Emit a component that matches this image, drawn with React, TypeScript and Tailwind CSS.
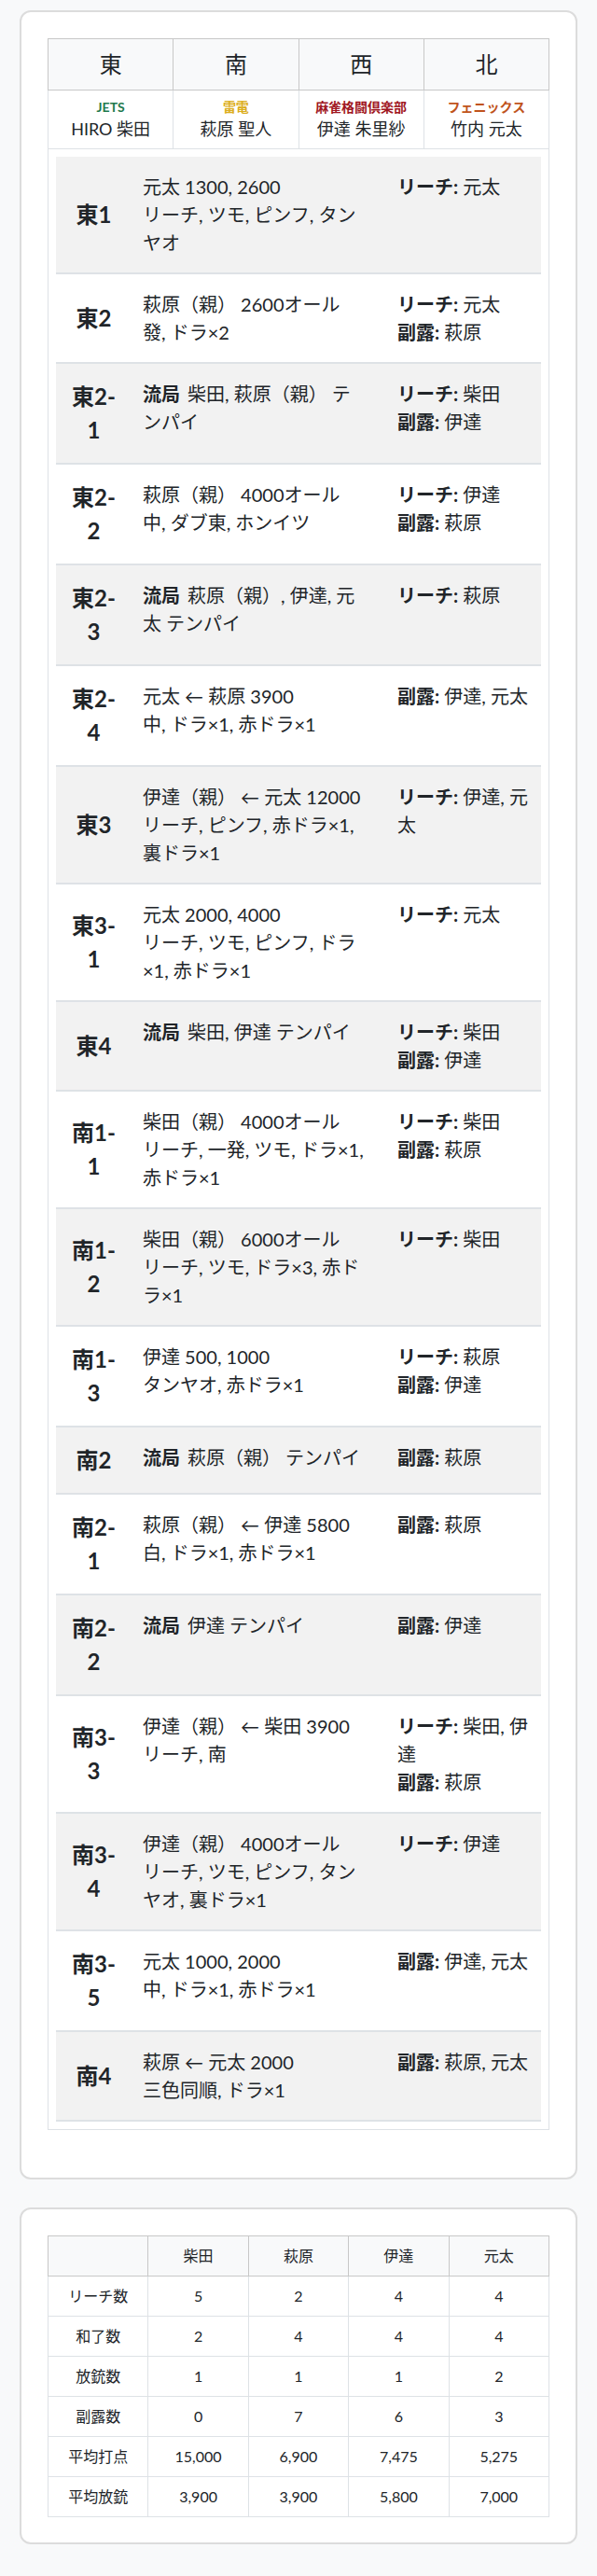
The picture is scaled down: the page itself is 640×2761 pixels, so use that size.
import React from 'react';

interface Round {
  label: string;
  draw?: boolean;
  lines: string[];
  riichi?: string;
  naki?: string;
}

const rounds: Round[] = [
  { label: '東1', lines: ['元太 1300, 2600', 'リーチ, ツモ, ピンフ, タンヤオ'], riichi: '元太' },
  { label: '東2', lines: ['萩原（親） 2600オール', '發, ドラ×2'], riichi: '元太', naki: '萩原' },
  { label: '東2-1', draw: true, lines: ['柴田, 萩原（親） テンパイ'], riichi: '柴田', naki: '伊達' },
  { label: '東2-2', lines: ['萩原（親） 4000オール', '中, ダブ東, ホンイツ'], riichi: '伊達', naki: '萩原' },
  { label: '東2-3', draw: true, lines: ['萩原（親）, 伊達, 元太 テンパイ'], riichi: '萩原' },
  { label: '東2-4', lines: ['元太 ← 萩原 3900', '中, ドラ×1, 赤ドラ×1'], naki: '伊達, 元太' },
  { label: '東3', lines: ['伊達（親） ← 元太 12000', 'リーチ, ピンフ, 赤ドラ×1, 裏ドラ×1'], riichi: '伊達, 元太' },
  { label: '東3-1', lines: ['元太 2000, 4000', 'リーチ, ツモ, ピンフ, ドラ×1, 赤ドラ×1'], riichi: '元太' },
  { label: '東4', draw: true, lines: ['柴田, 伊達 テンパイ'], riichi: '柴田', naki: '伊達' },
  { label: '南1-1', lines: ['柴田（親） 4000オール', 'リーチ, 一発, ツモ, ドラ×1, 赤ドラ×1'], riichi: '柴田', naki: '萩原' },
  { label: '南1-2', lines: ['柴田（親） 6000オール', 'リーチ, ツモ, ドラ×3, 赤ドラ×1'], riichi: '柴田' },
  { label: '南1-3', lines: ['伊達 500, 1000', 'タンヤオ, 赤ドラ×1'], riichi: '萩原', naki: '伊達' },
  { label: '南2', draw: true, lines: ['萩原（親） テンパイ'], naki: '萩原' },
  { label: '南2-1', lines: ['萩原（親） ← 伊達 5800', '白, ドラ×1, 赤ドラ×1'], naki: '萩原' },
  { label: '南2-2', draw: true, lines: ['伊達 テンパイ'], naki: '伊達' },
  { label: '南3-3', lines: ['伊達（親） ← 柴田 3900', 'リーチ, 南'], riichi: '柴田, 伊達', naki: '萩原' },
  { label: '南3-4', lines: ['伊達（親） 4000オール', 'リーチ, ツモ, ピンフ, タンヤオ, 裏ドラ×1'], riichi: '伊達' },
  { label: '南3-5', lines: ['元太 1000, 2000', '中, ドラ×1, 赤ドラ×1'], naki: '伊達, 元太' },
  { label: '南4', lines: ['萩原 ← 元太 2000', '三色同順, ドラ×1'], naki: '萩原, 元太' },
];

const seats = [
  { wind: '東', team: 'JETS', color: 'text-[#1f7a4d]', player: 'HIRO 柴田' },
  { wind: '南', team: '雷電', color: 'text-[#dcae1d]', player: '萩原 聖人' },
  { wind: '西', team: '麻雀格闘倶楽部', color: 'text-[#a01722]', player: '伊達 朱里紗' },
  { wind: '北', team: 'フェニックス', color: 'text-[#c0531c]', player: '竹内 元太' },
];

const stats = [
  { name: 'リーチ数', values: ['5', '2', '4', '4'] },
  { name: '和了数', values: ['2', '4', '4', '4'] },
  { name: '放銃数', values: ['1', '1', '1', '2'] },
  { name: '副露数', values: ['0', '7', '6', '3'] },
  { name: '平均打点', values: ['15,000', '6,900', '7,475', '5,275'] },
  { name: '平均放銃', values: ['3,900', '3,900', '5,800', '7,000'] },
];

function RoundRow({ round, striped }: { round: Round; striped: boolean }) {
  return (
    <div
      className={`grid grid-cols-[81px_269px_174px] border-b-2 border-[#dee2e6] ${
        striped ? 'bg-[#f2f2f2]' : 'bg-white'
      }`}
    >
      {/* 局 */}
      <div className="flex items-center justify-center px-4 py-[17px] text-center text-[24px] font-bold leading-[36px]">
        {round.label}
      </div>

      {/* 結果 */}
      <div className="pl-3 pr-4 py-[17px] text-[20px] leading-[30px]">
        {round.lines.map((line, i) => (
          <div key={i}>
            {round.draw && i === 0 && <span className="mr-2 font-bold">流局</span>}
            {line}
          </div>
        ))}
      </div>

      {/* リーチ・副露 */}
      <div className="px-4 py-[17px] text-[20px] leading-[30px]">
        {round.riichi && (
          <div>
            <span className="font-bold">リーチ:</span> {round.riichi}
          </div>
        )}
        {round.naki && (
          <div>
            <span className="font-bold">副露:</span> {round.naki}
          </div>
        )}
      </div>
    </div>
  );
}

export default function App() {
  return (
    <div className="min-h-screen bg-[#f8f9fa] px-[21px] pt-[11px] pb-[42px] font-[family-name:Lato,'Noto_Sans_CJK_JP',sans-serif] text-[#212529]">
      {/* 局ごとの結果 */}
      <div className="rounded-xl border-2 border-[#dcdcdc] bg-white px-7 pt-7 pb-[51px]">
        <table className="w-full table-fixed border-collapse border border-[#dee2e6]">
          <thead>
            <tr>
              {seats.map((s) => (
                <th
                  key={s.wind}
                  className="border border-[#c8c8c8] bg-[#f8f9fa] py-[9px] text-center text-2xl font-normal leading-[36px]"
                >
                  {s.wind}
                </th>
              ))}
            </tr>
          </thead>
          <tbody>
            <tr>
              {seats.map((s) => (
                <td key={s.wind} className="border border-[#dee2e6] py-[7px] text-center">
                  <div className={`text-sm font-bold leading-[21px] ${s.color}`}>{s.team}</div>
                  <div className="text-[18px] leading-[27px]">{s.player}</div>
                </td>
              ))}
            </tr>
            <tr>
              <td colSpan={4} className="border border-[#dee2e6] p-2">
                {rounds.map((r, i) => (
                  <RoundRow key={r.label} round={r} striped={i % 2 === 0} />
                ))}
              </td>
            </tr>
          </tbody>
        </table>
      </div>

      {/* 集計 */}
      <div className="mt-[30px] rounded-xl border-2 border-[#dcdcdc] bg-white px-7 pt-7 pb-[27px]">
        <table className="w-full table-fixed border-collapse border border-[#dee2e6] text-center text-base">
          <thead>
            <tr>
              <th className="border border-[#c8c8c8] bg-[#f8f9fa] py-[9px] font-normal leading-6"></th>
              {['柴田', '萩原', '伊達', '元太'].map((n) => (
                <th key={n} className="border border-[#c8c8c8] bg-[#f8f9fa] py-[9px] font-normal leading-6">
                  {n}
                </th>
              ))}
            </tr>
          </thead>
          <tbody>
            {stats.map((row) => (
              <tr key={row.name}>
                <td className="border border-[#dee2e6] py-[9px] leading-6">{row.name}</td>
                {row.values.map((v, i) => (
                  <td key={i} className="border border-[#dee2e6] py-[9px] leading-6">
                    {v}
                  </td>
                ))}
              </tr>
            ))}
          </tbody>
        </table>
      </div>
    </div>
  );
}
